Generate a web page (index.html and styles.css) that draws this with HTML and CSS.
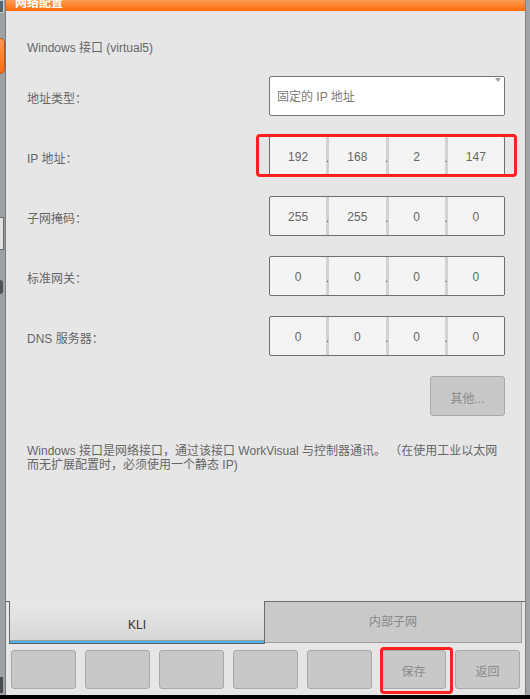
FILE: index.html
```html
<!DOCTYPE html>
<html>
<head>
<title>网络配置</title>
<link rel="stylesheet" href="styles.css">
</head>
<body>
<div class="screen">
    <div class="side-left">
        <div class="sl-top"></div>
        <div class="sl-tab"></div>
        <div class="sl-box"></div>
        <div class="sl-knob"></div>
        <div class="sl-bottom"></div>
    </div>

    <div class="panel">
        <div class="panel-head"><span>网络配置</span></div>

        <div class="panel-body">
            <div class="iface">Windows 接口 (virtual5)</div>

            <div class="row">
                <div class="label">地址类型：</div>
                <div class="select">固定的 IP 地址</div>
            </div>
            <div class="row">
                <div class="label">IP 地址：</div>
                <div class="ipbox">
                    <span class="seg">192</span><span class="dot">.</span><span class="seg">168</span><span class="dot">.</span><span class="seg">2</span><span class="dot">.</span><span class="seg">147</span>
                </div>
            </div>
            <div class="row">
                <div class="label">子网掩码：</div>
                <div class="ipbox">
                    <span class="seg">255</span><span class="dot">.</span><span class="seg">255</span><span class="dot">.</span><span class="seg">0</span><span class="dot">.</span><span class="seg">0</span>
                </div>
            </div>
            <div class="row">
                <div class="label">标准网关：</div>
                <div class="ipbox">
                    <span class="seg">0</span><span class="dot">.</span><span class="seg">0</span><span class="dot">.</span><span class="seg">0</span><span class="dot">.</span><span class="seg">0</span>
                </div>
            </div>
            <div class="row">
                <div class="label">DNS 服务器：</div>
                <div class="ipbox">
                    <span class="seg">0</span><span class="dot">.</span><span class="seg">0</span><span class="dot">.</span><span class="seg">0</span><span class="dot">.</span><span class="seg">0</span>
                </div>
            </div>

            <div class="more-row"><button class="btn more">其他...</button></div>

            <p class="note">Windows 接口是网络接口，通过该接口 WorkVisual 与控制器通讯。 （在使用工业以太网<br>而无扩展配置时，必须使用一个静态 IP)</p>
        </div>

        <div class="tabs">
            <div class="tab active">KLI</div>
            <div class="tab">内部子网</div>
        </div>

        <div class="actions">
            <button class="btn act"></button>
            <button class="btn act"></button>
            <button class="btn act"></button>
            <button class="btn act"></button>
            <button class="btn act"></button>
            <button class="btn act">保存</button>
            <button class="btn act">返回</button>
        </div>
    </div>

    <div class="side-right"></div>
</div>

<!-- red highlight frames -->
<div class="mark mark-ip"></div>
<div class="mark mark-save"></div>
</body>
</html>
```

FILE: styles.css
```css
body {
    margin: 0;
    width: 530px;
    height: 699px;
    background-color: #000;
    font-family: "Liberation Sans", "Noto Sans CJK SC", sans-serif;
    font-size: 12px;
    overflow: hidden;
}

.screen {
    display: flex;
    height: 695px;
}

/* partly visible side bar on the left */
.side-left {
    width: 5px;
    background-color: #9da1a4;
    border-right: 1px solid #77797c;
    display: flex;
    flex-direction: column;
}
.sl-top {
    width: 3px;
    height: 11px;
    background-color: #5f6163;
    border: 1px solid #c8c8c8;
    border-left: none;
}
.sl-tab {
    margin-top: 25px;
    width: 4px;
    height: 34px;
    background: linear-gradient(#ff9a50, #ff6a10);
    border: 1px solid #c0561a;
    border-left: none;
    border-radius: 0 5px 5px 0;
}
.sl-box {
    margin-top: 143px;
    width: 3px;
    height: 31px;
    background-color: #e2e2e2;
    border: 1px solid #6a6a6a;
    border-left: none;
}
.sl-knob {
    margin-top: 30px;
    width: 3px;
    height: 14px;
    background-color: #4e5052;
    border-radius: 0 3px 3px 0;
}
.sl-bottom {
    margin-top: auto;
    margin-bottom: 2px;
    width: 3px;
    height: 16px;
    background-color: #4a4c4e;
}

.side-right {
    width: 4px;
    background-color: #a0a4a6;
    border-left: 1px solid #808386;
}

.panel {
    width: 519px;
    background-color: #e6e6e6;
    display: flex;
    flex-direction: column;
}

.panel-head {
    height: 11px;
    background: linear-gradient(#ff9d55, #ff6a0c);
    overflow: hidden;
    padding-left: 9px;
}
.panel-head span {
    display: block;
    margin-top: -5px;
    line-height: 16px;
    color: #fff;
    font-weight: bold;
    font-size: 12px;
}

.panel-body {
    padding: 0 20px 0 21px;
    color: #666;
}

.iface {
    margin-top: 29px;
    line-height: 16px;
}

.row {
    display: flex;
    align-items: center;
    height: 40px;
    margin-top: 20px;
}
.row:first-of-type {
    margin-top: 21px;
}
.label {
    flex: 1;
    padding-top: 3px;
}

.select {
    position: relative;
    box-sizing: border-box;
    width: 236px;
    height: 40px;
    padding: 3px 0 0 7px;
    line-height: 35px;
    background-color: #fff;
    border: 1px solid #767676;
    border-radius: 2px;
    color: #7a7a7a;
}
.select::after {
    content: "";
    position: absolute;
    right: 3px;
    top: 1px;
    border-left: 3px solid transparent;
    border-right: 3px solid transparent;
    border-top: 4px solid #a0a0a0;
}

.ipbox {
    box-sizing: border-box;
    width: 236px;
    height: 40px;
    display: flex;
    border: 1px solid #6e6e6e;
    border-radius: 2px;
    background-color: #f4f4f4;
    overflow: hidden;
}
.seg {
    flex: 1;
    text-align: center;
    padding-top: 3px;
    line-height: 35px;
    color: #666;
}
.dot {
    width: 3px;
    background-color: #d2d2d2;
    padding-top: 3px;
    line-height: 37px;
    text-indent: -0.5px;
    color: #666;
    overflow: visible;
}

.more-row {
    display: flex;
    justify-content: flex-end;
    margin-top: 20px;
}

.btn {
    font-family: "Liberation Sans", "Noto Sans CJK SC", sans-serif;
    font-size: 12px;
    color: #8a8a8a;
    background-color: #c8c8c8;
    border: 1px solid #a9a9a9;
    border-radius: 3px;
    padding: 2px 0 0 0;
}
.more {
    width: 75px;
    height: 40px;
}

.note {
    margin: 28px 0 0 0;
    line-height: 14px;
    white-space: nowrap;
    color: #666;
}

.tabs {
    margin-top: auto;
    display: flex;
    padding: 0 3px;
    border-top: 1px solid #6e6e6e;
}
.tab {
    width: 256px;
    box-sizing: border-box;
    height: 41px;
    text-align: center;
    line-height: 41px;
    color: #888;
    background-color: #c9c9c9;
    border-right: 1px solid #9c9c9c;
    border-bottom: 1px solid #9c9c9c;
    font-size: 12px;
}
.tab.active {
    margin-top: -1px;
    height: 43px;
    line-height: 48px;
    color: #333;
    background: linear-gradient(#e8e8e8, #d6d6d6);
    border-left: 1px solid #6a6a6a;
    border-right: 1px solid #6a6a6a;
    border-bottom: 1px solid #5e5e5e;
    box-shadow: inset 0 -2px 0 #4db6ef, inset 0 -3px 0 #9a9a9a;
}
.tab + .tab {
    width: 257px;
}

.actions {
    display: flex;
    gap: 9px;
    padding: 6px 5px 6px 5px;
}
.act {
    width: 65px;
    height: 39px;
}

.mark {
    position: absolute;
    box-sizing: border-box;
    border: 3px solid #ff2020;
    border-radius: 4px;
}
.mark-ip {
    left: 256px;
    top: 134px;
    width: 261px;
    height: 43px;
}
.mark-save {
    left: 380px;
    top: 647px;
    width: 73px;
    height: 47px;
}
```
